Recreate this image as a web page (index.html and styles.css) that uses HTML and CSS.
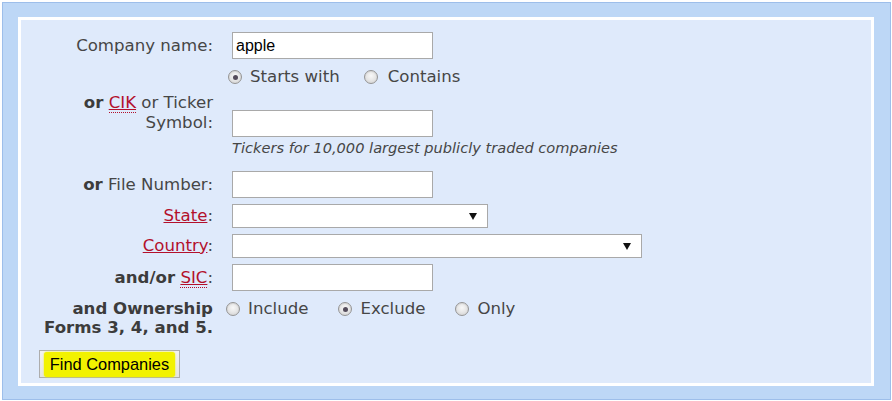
FILE: index.html
```html
<!DOCTYPE html>
<html>
<head>
<meta charset="utf-8">
<link rel="stylesheet" href="styles.css">
</head>
<body>
<div class="outer">
  <div class="panel">
    <form class="form">
      <div class="row r-company">
        <label class="lbl">Company name:</label>
        <div class="ctl"><input class="txt" type="text" value="apple"></div>
      </div>
      <div class="row r-match">
        <div class="lbl"></div>
        <div class="ctl radios">
          <label class="opt"><input type="radio" name="match" checked><span>Starts with</span></label>
          <label class="opt opt-contains"><input type="radio" name="match"><span>Contains</span></label>
        </div>
      </div>
      <div class="row r-cik">
        <label class="lbl lbl-two"><b>or</b> <a href="#" class="abbr">CIK</a> or Ticker<br>Symbol:</label>
        <div class="ctl"><input class="txt" type="text"></div>
      </div>
      <div class="row r-hint">
        <div class="lbl"></div>
        <div class="ctl hint">Tickers for 10,000 largest publicly traded companies</div>
      </div>
      <div class="row r-file">
        <label class="lbl"><b>or</b> File Number:</label>
        <div class="ctl"><input class="txt" type="text"></div>
      </div>
      <div class="row r-state">
        <label class="lbl"><a href="#">State</a>:</label>
        <div class="ctl"><span class="sel sel-state"><select><option></option></select></span></div>
      </div>
      <div class="row r-country">
        <label class="lbl"><a href="#">Country</a>:</label>
        <div class="ctl"><span class="sel sel-country"><select><option></option></select></span></div>
      </div>
      <div class="row r-sic">
        <label class="lbl"><b>and/or</b> <a href="#" class="abbr">SIC</a>:</label>
        <div class="ctl"><input class="txt" type="text"></div>
      </div>
      <div class="row r-owner">
        <label class="lbl lbl-owner"><b>and Ownership<br>Forms 3, 4, and 5.</b></label>
        <div class="ctl radios">
          <label class="opt opt-include"><input type="radio" name="own"><span>Include</span></label>
          <label class="opt opt-exclude"><input type="radio" name="own" checked><span>Exclude</span></label>
          <label class="opt opt-only"><input type="radio" name="own"><span>Only</span></label>
        </div>
      </div>
      <div class="actions">
        <button type="button" class="btn"><span class="hl">Find Companies</span></button>
      </div>
    </form>
  </div>
</div>
</body>
</html>
```
FILE: styles.css
```css
html, body {
  margin: 0;
  padding: 0;
  background: #ffffff;
}
body {
  font-family: "DejaVu Sans", Verdana, sans-serif;
  font-size: 16.6px;
  color: #464646;
}
.outer {
  margin: 2px 1px 0 2px;
  border: 1px solid #9dbeea;
  background: #bdd7f6;
  padding: 14px 16px 0 15px;
  box-sizing: border-box;
  height: 398px;
}
.panel {
  border: 3px solid #ffffff;
  background: #dfeafb;
  height: 369px;
  box-sizing: border-box;
  padding: 12px 0 0 18px;
}
.form {
  display: flex;
  flex-direction: column;
  margin: 0;
}
.row {
  display: grid;
  grid-template-columns: 174px 1fr;
  column-gap: 19px;
  align-items: center;
}
.lbl {
  text-align: right;
  line-height: 20px;
  white-space: nowrap;
}
.lbl b {
  color: #3c3c3c;
}
a {
  color: #b3102c;
  text-decoration: underline;
}
a.abbr {
  border-bottom: 1px dotted #b3102c;
}
.txt {
  box-sizing: border-box;
  width: 201px;
  height: 27px;
  border: 1px solid #a9a9a9;
  background: #fff;
  margin: 0;
  padding: 0 3px;
  font-family: "Liberation Sans", Arial, sans-serif;
  font-size: 16px;
  color: #000;
  outline: none;
}
.r-match { margin-top: 6px; height: 24px; }
.radios {
  display: flex;
  align-items: center;
  margin-left: -4px;
}
.opt {
  display: inline-flex;
  align-items: center;
  line-height: 20px;
}
.opt input {
  -webkit-appearance: none;
  appearance: none;
  width: 14px;
  height: 14px;
  margin: 0 8px 0 0;
  border: 1px solid #959595;
  border-radius: 50%;
  background: radial-gradient(circle at 50% 40%, #f8f8f8 0%, #e6e6e6 50%, #cccccc 100%);
  box-shadow: inset 0 1px 1px rgba(0,0,0,0.08);
  box-sizing: border-box;
  position: relative;
  flex: none;
}
.opt input:checked::after {
  content: "";
  position: absolute;
  left: 3.5px;
  top: 3.5px;
  width: 5px;
  height: 5px;
  border-radius: 50%;
  background: #544c5b;
}
.opt-contains { margin-left: 24px; }
.opt-contains input { margin-right: 10px; }
.r-cik { margin-top: 4px; align-items: end; }
.lbl-two { padding-bottom: 4px; }
.r-hint { margin-top: 2px; }
.hint {
  font-style: italic;
  font-size: 14.6px;
  line-height: 18px;
  color: #464646;
}
.r-file { margin-top: 14px; }
.r-state, .r-country, .r-sic { margin-top: 6px; }
.sel {
  position: relative;
  display: inline-block;
}
.sel select {
  -webkit-appearance: none;
  appearance: none;
  box-sizing: border-box;
  height: 24px;
  border: 1px solid #a9a9a9;
  background: #fff;
  margin: 0;
  padding: 0 3px;
  font-family: "Liberation Sans", Arial, sans-serif;
  font-size: 14px;
  border-radius: 0;
  outline: none;
  display: block;
}
.sel-state select { width: 256px; }
.sel-country select { width: 410px; }
.sel::after {
  content: "";
  position: absolute;
  right: 11px;
  top: 9px;
  border-left: 4px solid transparent;
  border-right: 4px solid transparent;
  border-top: 7px solid #111;
  pointer-events: none;
}
.r-owner { margin-top: 8px; align-items: start; }
.lbl-owner { line-height: 19px; }
.r-owner .radios { margin-left: -6px; }
.opt-exclude, .opt-only { margin-left: 30px; }
.actions { margin-top: 13px; }
.btn {
  box-sizing: border-box;
  width: 141px;
  height: 28px;
  border: 1px solid #adadad;
  background: linear-gradient(#f2f2f2, #e4e4e4);
  margin: 0;
  padding: 0;
  font-family: "Liberation Sans", Arial, sans-serif;
  font-size: 16.4px;
  color: #000;
  display: flex;
  align-items: center;
  justify-content: center;
}
.hl {
  background: #f2f200;
  padding: 3px 6px;
  border-radius: 3px;
  box-shadow: 0 0 2px #f2f200;
}
```
